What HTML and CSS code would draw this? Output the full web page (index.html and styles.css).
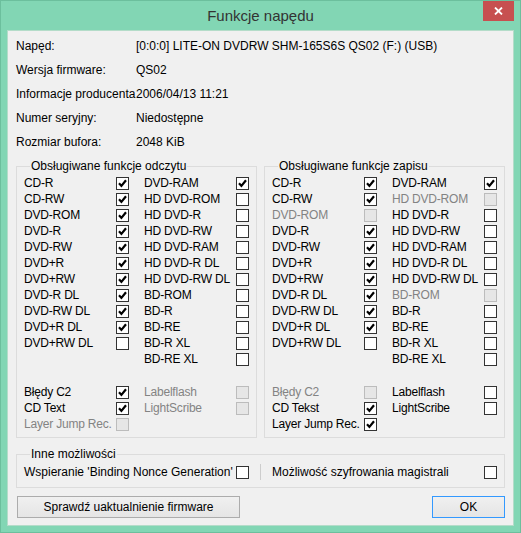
FILE: index.html
```html
<!DOCTYPE html>
<html lang="pl">

<head>
    <meta charset="UTF-8">
    <title>Funkcje napędu</title>
    <link rel="stylesheet" href="styles.css">
</head>

<body>
    <div class="window">
        <div class="titlebar">
            <span></span>
            <span class="title">Funkcje napędu</span>
            <span class="close"><svg width="9" height="8" viewBox="0 0 9 8"><path d="M1 0.5l7 7M8 0.5l-7 7" stroke="#fff" stroke-width="1.8" fill="none"/></svg></span>
        </div>
        <div class="client">
            <!-- dane napędu -->
            <div class="info">
                <div class="info-row"><span class="key">Napęd:</span><span>[0:0:0] LITE-ON DVDRW SHM-165S6S QS02 (F:) (USB)</span></div>
                <div class="info-row"><span class="key">Wersja firmware:</span><span>QS02</span></div>
                <div class="info-row"><span class="key">Informacje producenta</span><span class="val">2006/04/13 11:21</span></div>
                <div class="info-row"><span class="key">Numer seryjny:</span><span>Niedostępne</span></div>
                <div class="info-row"><span class="key">Rozmiar bufora:</span><span>2048 KiB</span></div>
            </div>

            <div class="groups">
                <!-- odczyt -->
                <div class="group">
                    <div class="legend">Obsługiwane funkcje odczytu</div>
                    <div class="row"><span>CD-R</span><i class="cb"><svg viewBox="0 0 11 11"><path d="M2 5.3l2.4 2.6 4.6-5.6"/></svg></i><span>DVD-RAM</span><i class="cb"><svg viewBox="0 0 11 11"><path d="M2 5.3l2.4 2.6 4.6-5.6"/></svg></i></div>
                    <div class="row"><span>CD-RW</span><i class="cb"><svg viewBox="0 0 11 11"><path d="M2 5.3l2.4 2.6 4.6-5.6"/></svg></i><span>HD DVD-ROM</span><i class="cb"></i></div>
                    <div class="row"><span>DVD-ROM</span><i class="cb"><svg viewBox="0 0 11 11"><path d="M2 5.3l2.4 2.6 4.6-5.6"/></svg></i><span>HD DVD-R</span><i class="cb"></i></div>
                    <div class="row"><span>DVD-R</span><i class="cb"><svg viewBox="0 0 11 11"><path d="M2 5.3l2.4 2.6 4.6-5.6"/></svg></i><span>HD DVD-RW</span><i class="cb"></i></div>
                    <div class="row"><span>DVD-RW</span><i class="cb"><svg viewBox="0 0 11 11"><path d="M2 5.3l2.4 2.6 4.6-5.6"/></svg></i><span>HD DVD-RAM</span><i class="cb"></i></div>
                    <div class="row"><span>DVD+R</span><i class="cb"><svg viewBox="0 0 11 11"><path d="M2 5.3l2.4 2.6 4.6-5.6"/></svg></i><span>HD DVD-R DL</span><i class="cb"></i></div>
                    <div class="row"><span>DVD+RW</span><i class="cb"><svg viewBox="0 0 11 11"><path d="M2 5.3l2.4 2.6 4.6-5.6"/></svg></i><span>HD DVD-RW DL</span><i class="cb"></i></div>
                    <div class="row"><span>DVD-R DL</span><i class="cb"><svg viewBox="0 0 11 11"><path d="M2 5.3l2.4 2.6 4.6-5.6"/></svg></i><span>BD-ROM</span><i class="cb"></i></div>
                    <div class="row"><span>DVD-RW DL</span><i class="cb"><svg viewBox="0 0 11 11"><path d="M2 5.3l2.4 2.6 4.6-5.6"/></svg></i><span>BD-R</span><i class="cb"></i></div>
                    <div class="row"><span>DVD+R DL</span><i class="cb"><svg viewBox="0 0 11 11"><path d="M2 5.3l2.4 2.6 4.6-5.6"/></svg></i><span>BD-RE</span><i class="cb"></i></div>
                    <div class="row"><span>DVD+RW DL</span><i class="cb"></i><span>BD-R XL</span><i class="cb"></i></div>
                    <div class="row"><span></span><span></span><span>BD-RE XL</span><i class="cb"></i></div>
                    <div class="spacer"></div>
                    <div class="row"><span>Błędy C2</span><i class="cb"><svg viewBox="0 0 11 11"><path d="M2 5.3l2.4 2.6 4.6-5.6"/></svg></i><span class="dis">Labelflash</span><i class="cb dis"></i></div>
                    <div class="row"><span>CD Text</span><i class="cb"><svg viewBox="0 0 11 11"><path d="M2 5.3l2.4 2.6 4.6-5.6"/></svg></i><span class="dis">LightScribe</span><i class="cb dis"></i></div>
                    <div class="row"><span class="dis">Layer Jump Rec.</span><i class="cb dis"></i></div>
                </div>

                <!-- zapis -->
                <div class="group">
                    <div class="legend">Obsługiwane funkcje zapisu</div>
                    <div class="row"><span>CD-R</span><i class="cb"><svg viewBox="0 0 11 11"><path d="M2 5.3l2.4 2.6 4.6-5.6"/></svg></i><span>DVD-RAM</span><i class="cb"><svg viewBox="0 0 11 11"><path d="M2 5.3l2.4 2.6 4.6-5.6"/></svg></i></div>
                    <div class="row"><span>CD-RW</span><i class="cb"><svg viewBox="0 0 11 11"><path d="M2 5.3l2.4 2.6 4.6-5.6"/></svg></i><span class="dis">HD DVD-ROM</span><i class="cb dis"></i></div>
                    <div class="row"><span class="dis">DVD-ROM</span><i class="cb dis"></i><span>HD DVD-R</span><i class="cb"></i></div>
                    <div class="row"><span>DVD-R</span><i class="cb"><svg viewBox="0 0 11 11"><path d="M2 5.3l2.4 2.6 4.6-5.6"/></svg></i><span>HD DVD-RW</span><i class="cb"></i></div>
                    <div class="row"><span>DVD-RW</span><i class="cb"><svg viewBox="0 0 11 11"><path d="M2 5.3l2.4 2.6 4.6-5.6"/></svg></i><span>HD DVD-RAM</span><i class="cb"></i></div>
                    <div class="row"><span>DVD+R</span><i class="cb"><svg viewBox="0 0 11 11"><path d="M2 5.3l2.4 2.6 4.6-5.6"/></svg></i><span>HD DVD-R DL</span><i class="cb"></i></div>
                    <div class="row"><span>DVD+RW</span><i class="cb"><svg viewBox="0 0 11 11"><path d="M2 5.3l2.4 2.6 4.6-5.6"/></svg></i><span>HD DVD-RW DL</span><i class="cb"></i></div>
                    <div class="row"><span>DVD-R DL</span><i class="cb"><svg viewBox="0 0 11 11"><path d="M2 5.3l2.4 2.6 4.6-5.6"/></svg></i><span class="dis">BD-ROM</span><i class="cb dis"></i></div>
                    <div class="row"><span>DVD-RW DL</span><i class="cb"><svg viewBox="0 0 11 11"><path d="M2 5.3l2.4 2.6 4.6-5.6"/></svg></i><span>BD-R</span><i class="cb"></i></div>
                    <div class="row"><span>DVD+R DL</span><i class="cb"><svg viewBox="0 0 11 11"><path d="M2 5.3l2.4 2.6 4.6-5.6"/></svg></i><span>BD-RE</span><i class="cb"></i></div>
                    <div class="row"><span>DVD+RW DL</span><i class="cb"></i><span>BD-R XL</span><i class="cb"></i></div>
                    <div class="row"><span></span><span></span><span>BD-RE XL</span><i class="cb"></i></div>
                    <div class="spacer"></div>
                    <div class="row"><span class="dis">Błędy C2</span><i class="cb dis"></i><span>Labelflash</span><i class="cb"></i></div>
                    <div class="row"><span>CD Tekst</span><i class="cb"><svg viewBox="0 0 11 11"><path d="M2 5.3l2.4 2.6 4.6-5.6"/></svg></i><span>LightScribe</span><i class="cb"></i></div>
                    <div class="row"><span>Layer Jump Rec.</span><i class="cb"><svg viewBox="0 0 11 11"><path d="M2 5.3l2.4 2.6 4.6-5.6"/></svg></i></div>
                </div>
            </div>

            <!-- inne -->
            <div class="group other">
                <div class="legend">Inne możliwości</div>
                <div class="other-row">
                    <span>Wspieranie 'Binding Nonce Generation'</span><i class="cb"></i>
                    <span></span><span class="sep"></span><span></span>
                    <span>Możliwość szyfrowania magistrali</span><i class="cb"></i>
                </div>
            </div>

            <div class="buttons">
                <button class="btn">Sprawdź uaktualnienie firmware</button>
                <button class="btn ok">OK</button>
            </div>
        </div>
    </div>
</body>

</html>
```

FILE: styles.css
```css
* {
    margin: 0;
    padding: 0;
    box-sizing: border-box;
}

body {
    font: 12px/16px "Liberation Sans", Arial, sans-serif;
    color: #000;
    background: #fff;
}

/* ramka okna */
.window {
    width: 521px;
    height: 533px;
    background: #82d6b4;
    border: 1px solid #6cbf9d;
    padding: 0 6px 6px;
    display: flex;
    flex-direction: column;
}

.titlebar {
    height: 29px;
    display: grid;
    grid-template-columns: 1fr auto 1fr;
    align-items: start;
}

.title {
    font-size: 15px;
    line-height: 30px;
    color: #333;
}

.close {
    justify-self: end;
    width: 31px;
    height: 20px;
    background: #c75050;
    display: flex;
    align-items: center;
    justify-content: center;
}

.close svg {
    display: block;
}

.client {
    flex: 1;
    background: #f0f0f0;
    border: 1px solid #b4dcc9;
    padding: 3px 8px 0;
}

/* informacje */
.info-row {
    display: grid;
    grid-template-columns: 120px auto;
    height: 24px;
    align-items: center;
    white-space: nowrap;
}

.val {
    background: #f0f0f0;
}

/* grupy */
.groups {
    display: flex;
    gap: 7px;
    margin-top: 12px;
}

.group {
    flex: 1;
    border: 1px solid #dcdcdc;
    padding: 0 0 5px 7px;
    display: flex;
    flex-direction: column;
}

.legend {
    align-self: flex-start;
    margin: -9px 0 1px 6px;
    padding: 0 1px;
    background: #f0f0f0;
}

.row {
    display: grid;
    grid-template-columns: 92px 28px 92px 13px;
    height: 16px;
    align-items: center;
    white-space: nowrap;
    letter-spacing: -0.2px;
}

.spacer {
    height: 17px;
}

.cb {
    display: block;
    width: 13px;
    height: 13px;
    border: 1px solid #333;
    background: #fff;
}

.cb svg {
    display: block;
    width: 11px;
    height: 11px;
}

.cb path {
    fill: none;
    stroke: #000;
    stroke-width: 2.2;
}

.cb.dis {
    background: #e6e6e6;
    border-color: #bcbcbc;
}

span.dis {
    color: #838383;
}

.other {
    flex: none;
    margin-top: 16px;
    padding-bottom: 7px;
}

.other .legend {
    margin-bottom: 2px;
}

.other-row {
    display: grid;
    grid-template-columns: 212px 13px 11px 1px 11px 212px 13px;
    height: 16px;
    align-items: center;
    white-space: nowrap;
}

.sep {
    height: 16px;
    background: #cdcdcd;
}

/* przyciski */
.buttons {
    display: flex;
    justify-content: space-between;
    margin-top: 8px;
    padding-left: 1px;
}

.btn {
    height: 22px;
    width: 223px;
    font: inherit;
    color: #000;
    border: 1px solid #acacac;
    background: linear-gradient(#f0f0f0, #e5e5e5);
}

.ok {
    width: 73px;
    border-color: #3399ff;
}
```
